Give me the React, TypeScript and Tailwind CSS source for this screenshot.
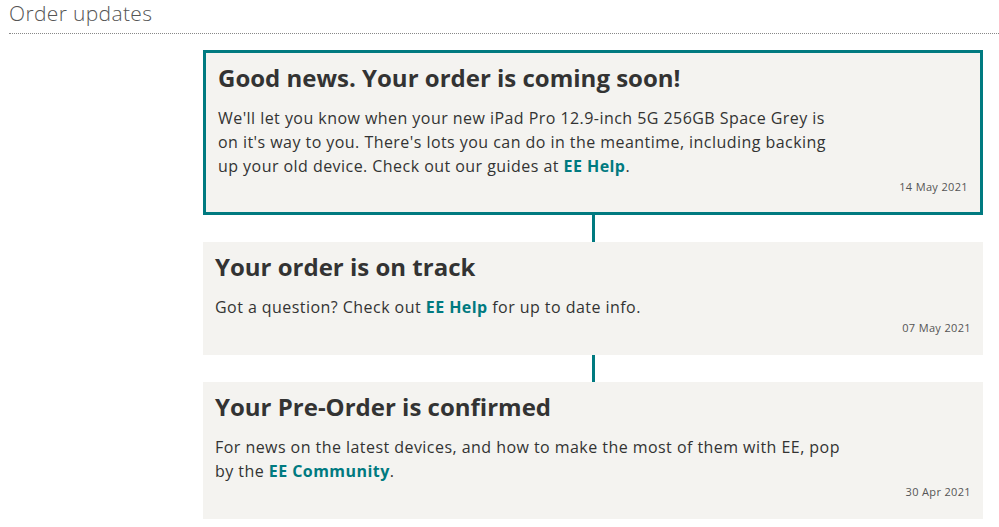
const updates = [
  {
    title: 'Good news. Your order is coming soon!',
    body: (
      <>
        We'll let you know when your new iPad Pro 12.9-inch 5G 256GB Space Grey is on it's way to you. There's lots you
        can do in the meantime, including backing up your old device. Check out our guides at{' '}
        <a className="font-bold text-[#007a80]">EE Help</a>.
      </>
    ),
    date: '14 May 2021',
    current: true,
    bodyWidth: 'max-w-[620px]',
  },
  {
    title: 'Your order is on track',
    body: (
      <>
        Got a question? Check out <a className="font-bold text-[#007a80]">EE Help</a> for up to date info.
      </>
    ),
    date: '07 May 2021',
    current: false,
    bodyWidth: 'max-w-[620px]',
  },
  {
    title: 'Your Pre-Order is confirmed',
    body: (
      <>
        For news on the latest devices, and how to make the most of them with EE, pop by the{' '}
        <a className="font-bold text-[#007a80]">EE Community</a>.
      </>
    ),
    date: '30 Apr 2021',
    current: false,
    bodyWidth: 'max-w-[640px]',
  },
];

const App = () => {
  return (
    <div className="min-h-[527px] bg-white pl-[9px] font-['Open_Sans',sans-serif] text-[#333]">
      <h2 className="border-b border-dotted border-[#888] pb-[6px] text-[21px] font-light leading-[27px] tracking-[0.35px] text-[#555]">
        Order updates
      </h2>
      <div className="ml-[194px] mt-[16px] flex w-[780px] flex-col items-center">
        {updates.map((u, i) => (
          <div key={u.date} className="flex w-full flex-col items-center">
            {i > 0 && <div className="h-[27px] w-[3px] bg-[#007a80]" />}
            <div
              className={
                u.current
                  ? 'w-full border-[3px] border-[#007a80] bg-[#f4f3f0] px-3 pb-[11px] pt-[11px]'
                  : 'w-full bg-[#f4f3f0] px-3 pb-[13px] pt-[11px]'
              }
            >
              <h3 className="text-[24px] font-bold leading-[28px] text-[#333]">{u.title}</h3>
              <p className={`mt-[14px] ${u.bodyWidth} text-[16px] leading-[24px] tracking-[0.45px]`}>{u.body}</p>
              <div className="mt-[1px] text-right text-[11px] leading-[16px] tracking-[0.35px] text-[#555]">{u.date}</div>
              <div className="h-[6px]" />
            </div>
          </div>
        ))}
      </div>
    </div>
  );
};

export default App;
